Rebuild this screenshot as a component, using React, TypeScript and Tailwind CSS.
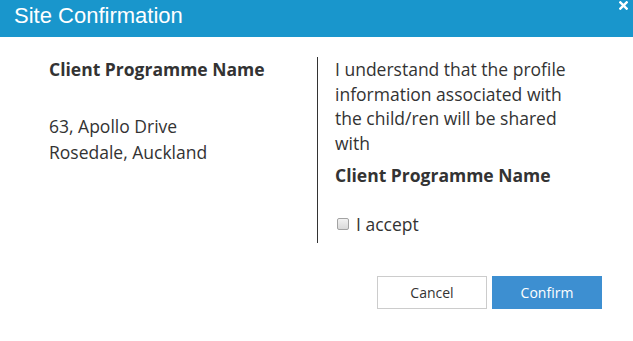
export default function App() {
  return (
    <div className="w-[633px] h-[341px] bg-white overflow-hidden relative" style={{ fontFamily: '"Open Sans", sans-serif' }}>
      <div className="h-[37px] bg-[#1996cc] flex items-start pt-[5px] pl-[14px]">
        <h1 className="text-white text-[22px] leading-[22px]" style={{ fontFamily: '"Liberation Sans", Arial, sans-serif' }}>
          Site Confirmation
        </h1>
      </div>
      <button className="absolute top-[1px] right-[5px] w-[9px] h-[9px]">
        <svg viewBox="0 0 10 10" className="w-[9px] h-[9px]">
          <path d="M1.5 1.5 L8.5 8.5 M8.5 1.5 L1.5 8.5" stroke="white" strokeWidth="2.6" strokeLinecap="square" />
        </svg>
      </button>

      <div className="flex pt-[20px] text-[17.5px] text-[#333]">
        <div className="w-[317px] pl-[49px] leading-[25px]">
          <p className="font-bold h-[25px]">Client Programme Name</p>
          <p className="mt-[31px] leading-[26px]">
            63, Apollo Drive
            <br />
            Rosedale, Auckland
          </p>
        </div>
        <div className="border-l border-[#333] h-[186px] pl-[17px] leading-[24.5px] w-[255px]">
          <p>I understand that the profile information associated with the child/ren will be shared with</p>
          <p className="font-bold mt-[8px]">Client Programme Name</p>
          <label className="flex items-center mt-[24px] gap-[7px]">
            <span className="ml-[2px] w-[12px] h-[12px] rounded-[2px] border border-[#a3a3a3] bg-gradient-to-b from-[#f2f2f2] to-[#d9d9d9]" />
            <span>I accept</span>
          </label>
        </div>
      </div>

      <div className="flex justify-end gap-[5px] pr-[31px] mt-[33px] text-[14px]">
        <button className="w-[110px] h-[33px] border border-[#ccc] bg-white text-[#333]">Cancel</button>
        <button className="w-[110px] h-[33px] bg-[#3d8fd1] text-white">Confirm</button>
      </div>
    </div>
  );
}
